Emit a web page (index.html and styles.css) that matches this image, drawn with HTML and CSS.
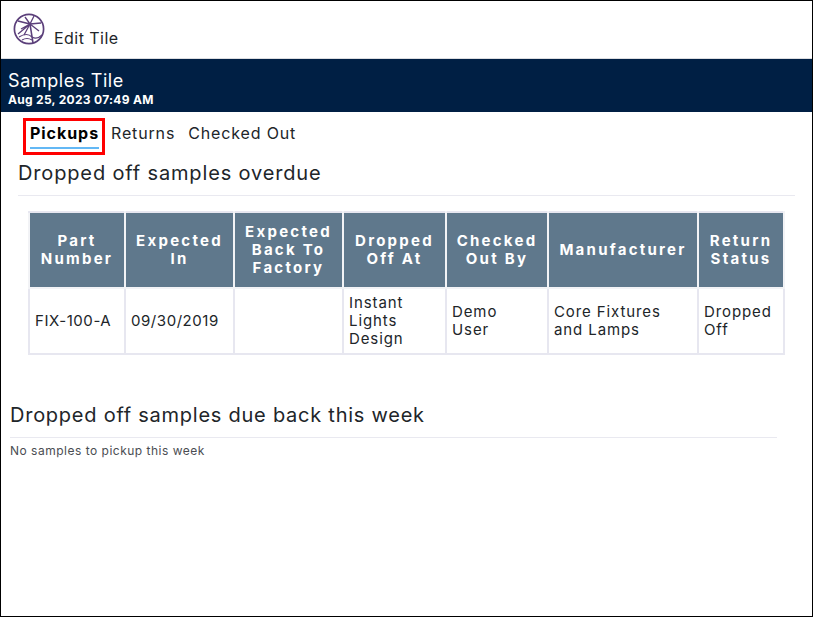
FILE: index.html
```html
<!DOCTYPE html>
<html lang="en">
<head>
  <meta charset="UTF-8">
  <meta name="viewport" content="width=device-width, initial-scale=1.0">
  <title>Samples Tile</title>
  <link rel="stylesheet" href="styles.css">
</head>
<body>
  <div class="page">
    <div class="top-bar">
      <svg class="logo" viewBox="0 0 32 32" fill="none" stroke="#5b3f7a" aria-hidden="true">
        <circle cx="16" cy="16" r="14.6" stroke-width="1.7"/>
        <path d="M17 11 L20 30" stroke-width="1.6"/>
        <path d="M17 11 L5 8 M17 11 L12 4 M17 11 L21 3 M17 11 L28 10 M17 11 L8 16 M17 11 L5 21 M17 11 L11 22 M17 11 L26 18" stroke-width="1.3"/>
        <path d="M6 24 Q14 19 19 24 Q24 27 29 22 M9 27 Q14 24 19 27" stroke-width="1.1"/>
      </svg>
      <span class="edit-title">Edit Tile</span>
    </div>

    <div class="title-band">
      <div class="band-title">Samples Tile</div>
      <div class="band-date">Aug 25, 2023 07:49 AM</div>
    </div>

    <div class="tabs">
      <div class="tab-active-box"><span class="tab-active">Pickups</span></div>
      <span class="tab">Returns</span>
      <span class="tab">Checked Out</span>
    </div>

    <section class="overdue">
      <h2 class="section-title">Dropped off samples overdue</h2>
      <table class="samples">
        <colgroup>
          <col class="col-part"><col class="col-in"><col class="col-back"><col class="col-at"><col class="col-by"><col class="col-mfr"><col class="col-status">
        </colgroup>
        <thead>
          <tr>
            <th>Part<br>Number</th>
            <th>Expected<br>In</th>
            <th>Expected<br>Back To<br>Factory</th>
            <th>Dropped<br>Off At</th>
            <th>Checked<br>Out By</th>
            <th>Manufacturer</th>
            <th>Return<br>Status</th>
          </tr>
        </thead>
        <tbody>
          <tr>
            <td class="num">FIX-100-A</td>
            <td class="num">09/30/2019</td>
            <td></td>
            <td>Instant<br>Lights<br>Design</td>
            <td>Demo<br>User</td>
            <td>Core Fixtures<br>and Lamps</td>
            <td>Dropped<br>Off</td>
          </tr>
        </tbody>
      </table>
    </section>

    <section class="due-week">
      <h2 class="section-title">Dropped off samples due back this week</h2>
      <p class="empty-note">No samples to pickup this week</p>
    </section>
  </div>
</body>
</html>
```

FILE: styles.css
```css
* { box-sizing: border-box; }
body {
  margin: 0;
  font-family: Inter, "Noto Sans", sans-serif;
  color: #212529;
  background: #fff;
}
.page {
  width: 813px;
  height: 617px;
  border: 1px solid #000;
  overflow: hidden;
}

.top-bar {
  height: 58px;
  padding: 12px 0 0 12px;
  display: flex;
  align-items: flex-start;
  border-bottom: 1px solid #dcdde0;
}
.logo { width: 32px; height: 32px; }
.edit-title { margin: 15px 0 0 9px; font-size: 16px; line-height: 20px; letter-spacing: 0.45px; }

.title-band {
  height: 53px;
  padding: 11px 0 0 7px;
  background: #001f44;
  color: #fff;
}
.band-title { font-size: 18px; line-height: 21px; letter-spacing: 0.6px; }
.band-date { margin-top: 1px; font-size: 12px; line-height: 15px; font-weight: 700; letter-spacing: 0.3px; }

.tabs {
  display: flex;
  align-items: flex-start;
  height: 43px;
  margin-top: 6px;
  padding-left: 22px;
  font-size: 16px;
  letter-spacing: 0.85px;
}
.tab-active-box {
  width: 82px;
  height: 37px;
  border: 3px solid #f00;
  padding: 2px 0 0 4px;
  margin-right: 6px;
}
.tab-active {
  display: block;
  width: 69px;
  height: 26px;
  line-height: 21px;
  font-weight: 700;
  letter-spacing: 0.95px;
  color: #000;
  border-bottom: 2px solid #63b8f5;
}
.tab { margin: 5px 13px 0 0; line-height: 21px; }

.section-title { margin: 0; font-weight: 400; font-size: 20px; line-height: 24px; letter-spacing: 0.75px; }

.overdue .section-title {
  margin: 0 17px;
  padding-bottom: 10px;
  border-bottom: 1px solid #e9e9f0;
  letter-spacing: 0.85px;
}

.samples {
  margin: 15px 0 0 27px;
  width: 757px;
  table-layout: fixed;
  border-collapse: collapse;
  border: 2px solid #e7e7f0;
  font-size: 15px;
  line-height: 18px;
  letter-spacing: 0.9px;
}
.col-part { width: 96px; }
.col-in { width: 109px; }
.col-back { width: 109px; }
.col-at { width: 103px; }
.col-by { width: 102px; }
.col-mfr { width: 150px; }
.col-status { width: 86px; }

.samples th {
  height: 76px;
  padding: 0;
  background: #5f788c;
  color: #fff;
  font-weight: 700;
  letter-spacing: 2.25px;
  border: 2px solid #f2f3f6;
  border-top-color: #e7e7f0;
}
.samples td {
  height: 66px;
  padding: 0 5px;
  border: 2px solid #e7e7f0;
}
.samples td.num { letter-spacing: 0.55px; }

.due-week { margin: 48px 0 0 9px; width: 767px; }
.due-week .section-title {
  padding-bottom: 10px;
  border-bottom: 1px solid #e9e9f0;
}
.empty-note { margin: 5px 0 0; font-size: 12px; line-height: 16px; letter-spacing: 0.5px; color: #4a4d52; }
```
